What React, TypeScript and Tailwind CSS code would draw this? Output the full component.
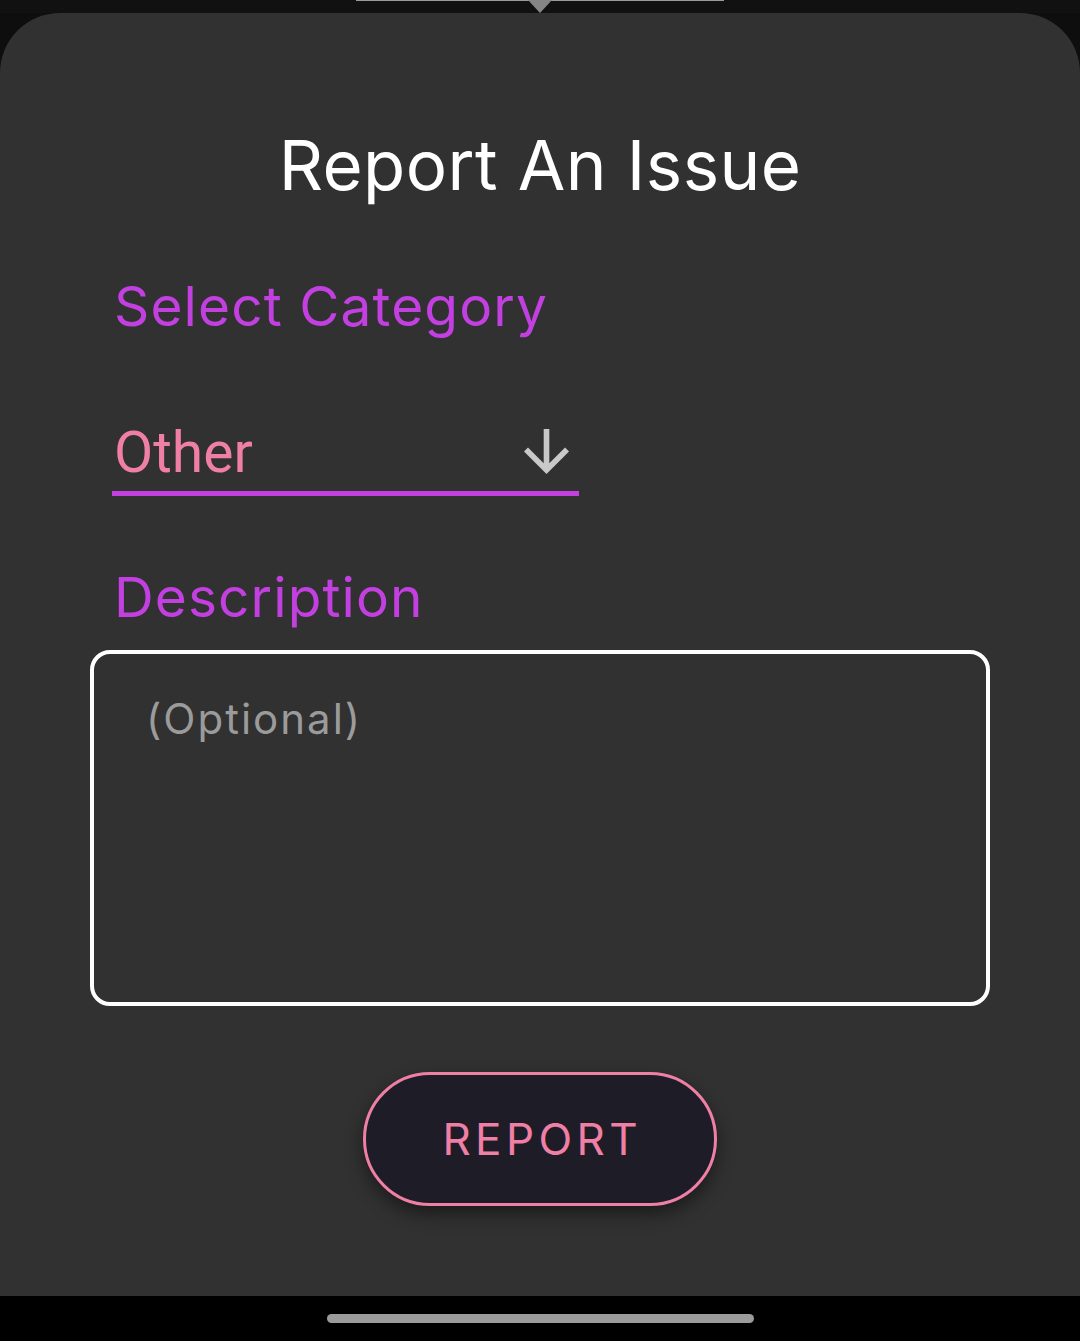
export default function App() {
  return (
    <div className="flex h-[1341px] w-[1080px] flex-col overflow-hidden bg-[#0e0e0e] font-['Inter',sans-serif]">
      {/* map peeking above the sheet */}
      <div className="relative h-[13px] shrink-0 bg-[#111111]">
        <div className="absolute left-[356px] top-0 h-[1px] w-[368px] bg-[#9a9a9a]" />
        <div className="absolute left-[528px] top-0 h-0 w-0 border-x-[12px] border-t-[13px] border-x-transparent border-t-[#858585]" />
      </div>

      <div className="flex flex-1 flex-col rounded-t-[60px] bg-[#313131]">
        <h1 className="mt-[110px] text-center text-[69px] leading-[84px] font-normal tracking-[0.006em] text-white">
          Report An Issue
        </h1>

        <div className="px-[114px]">
          <p className="mt-[64px] text-[55px] leading-[70px] tracking-[1.1px] text-[#c23fe0]">Select Category</p>

          <div className="mt-[78px] -ml-[2px] flex w-[467px] items-end justify-between border-b-[5px] border-[#c23fe0] pb-[4px] pl-[2px]">
            <span className="font-['Roboto',sans-serif] text-[57px] leading-[68px] text-[#f07fa6]">Other</span>
            <svg viewBox="4 4 16 16" className="mb-[13px] mr-[10px] h-[45px] w-[45px] fill-[#c9c9c9]">
              <path d="M20 12l-1.41-1.41L13 16.17V4h-2v12.17l-5.58-5.59L4 12l8 8 8-8z" />
            </svg>
          </div>

          <p className="mt-[66px] text-[55px] leading-[70px] tracking-[1.1px] text-[#c23fe0]">Description</p>
        </div>

        <div className="mx-[90px] mt-[18px] h-[356px] rounded-[20px] border-[4px] border-white px-[52px] pt-[40px]">
          <span className="text-[42px] leading-[50px] tracking-[2px] text-[#9b9b9b]">(Optional)</span>
        </div>

        <div className="mt-[66px] flex justify-center">
          <button className="flex h-[134px] w-[354px] items-center justify-center rounded-full border-[3px] border-[#f07fa6] bg-[#1e1d27] text-[44px] tracking-[0.1em] text-[#f07fa6] shadow-[0_8px_18px_rgba(0,0,0,0.45)]">
            <span className="pl-[0.1em]">REPORT</span>
          </button>
        </div>
      </div>

      {/* system navigation bar */}
      <div className="flex h-[45px] shrink-0 items-center justify-center bg-black">
        <div className="h-[9px] w-[427px] rounded-full bg-[#9b9b9b]" />
      </div>
    </div>
  );
}
